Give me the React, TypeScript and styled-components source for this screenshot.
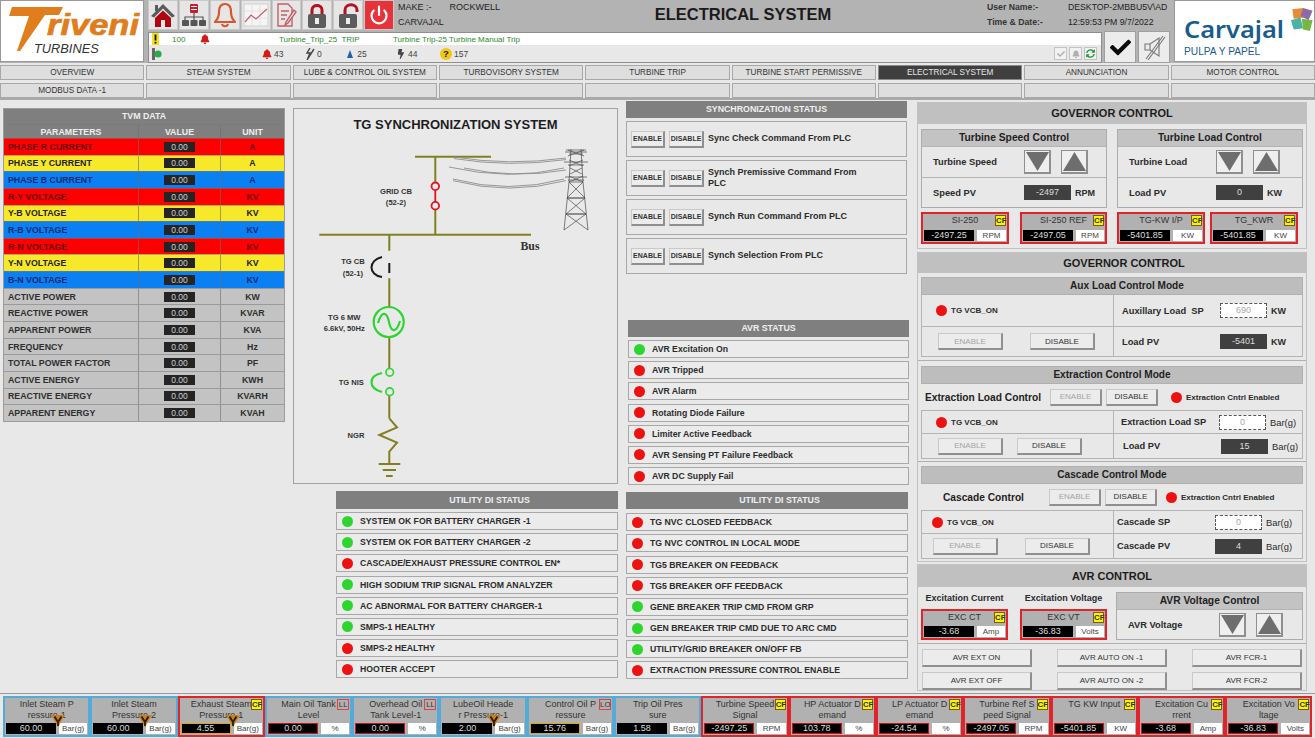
import React from 'react';
import styled, { createGlobalStyle } from 'styled-components';
import { FaBell, FaBolt, FaCheck, FaSyncAlt } from 'react-icons/fa';
import { Power } from 'lucide-react';

const GlobalStyle = createGlobalStyle`
  html, body { margin: 0; padding: 0; background: #e8e8e8; }
  * { box-sizing: border-box; }
  body { font-family: 'Liberation Sans', Arial, sans-serif; color: #222; }
`;

const Page = styled.div`
  width: 1315px;
  height: 738px;
  overflow: hidden;
  background: #e8e8e8;
  display: flex;
  flex-direction: column;
`;

/* ---------- header ---------- */
const Header = styled.header`
  height: 63px;
  background: #b3b3b3;
  display: flex;
  flex: none;
`;
const LogoBox = styled.div`
  width: 144px;
  height: 62px;
  background: #fff;
  border: 1px solid #999;
  flex: none;
`;
const CarvajalBox = styled.div`
  width: 141px;
  height: 62px;
  margin-left: 4px;
  background: #fff;
  border: 1px solid #999;
  flex: none;
`;
const HeaderMid = styled.div`
  flex: 1;
  min-width: 0;
  padding-left: 4px;
  display: flex;
  flex-direction: column;
`;
const HeaderTop = styled.div`
  height: 31px;
  display: flex;
  align-items: flex-start;
`;
const ToolButtons = styled.div`
  display: flex;
  gap: 1px;
  width: 246px;
  flex: none;
`;
const ToolButton = styled.div<{ $bg?: string }>`
  width: 30px;
  height: 30px;
  background: ${(p) => p.$bg ?? '#e6e6e6'};
  border: 1px solid #c9c9c9;
  display: flex;
  align-items: center;
  justify-content: center;
`;
const MakeGrid = styled.div`
  width: 130px;
  margin-left: 4px;
  font-size: 9px;
  line-height: 15px;
  color: #222;
  flex: none;
`;
const MakeValue = styled.span`
  margin-left: 18px;
`;
const ScreenTitle = styled.h1`
  margin: 0;
  width: 430px;
  flex: none;
  text-align: center;
  font-size: 16.5px;
  line-height: 28px;
  font-weight: 700;
  color: #1b1b1b;
`;
const UserGrid = styled.div`
  display: grid;
  grid-template-columns: 81px auto;
  font-size: 8.7px;
  line-height: 15px;
  color: #222;
  margin-left: 29px;
  flex: none;
  white-space: nowrap;
`;
const UserLabel = styled.span`
  font-weight: 700;
  color: #333;
`;
const HeaderBottom = styled.div`
  display: flex;
  height: 32px;
`;
const AlarmStrip = styled.div`
  width: 954px;
  margin-top: 1px;
  border: 1px solid #8e8e8e;
  display: flex;
  flex-direction: column;
  flex: none;
`;
const AlarmRow = styled.div`
  height: 12px;
  background: #fff;
  display: flex;
  align-items: center;
  font-size: 8px;
  color: #2a8a2a;
`;
const CountRow = styled.div`
  flex: 1;
  background: #e8e8e8;
  display: flex;
  align-items: center;
  font-size: 8.5px;
  color: #444;
`;
const Slot = styled.span<{ $w: number; $pad?: number }>`
  width: ${(p) => p.$w}px;
  padding-left: ${(p) => p.$pad ?? 0}px;
  flex: none;
  display: flex;
  align-items: center;
  gap: 2px;
  white-space: nowrap;
`;
const AckIcons = styled.div`
  margin-left: auto;
  display: flex;
  gap: 2px;
  padding-right: 4px;
  align-items: center;
`;
const AckIcon = styled.span<{ $green?: boolean }>`
  width: 13px;
  height: 13px;
  background: #f2f2f2;
  border: 1px solid #c4c4c4;
  display: flex;
  align-items: center;
  justify-content: center;
  color: ${(p) => (p.$green ? '#1f9a3a' : '#b0b0b0')};
`;
const BigButton = styled.div`
  width: 32px;
  height: 32px;
  margin-left: 2px;
  background: #ececec;
  border: 1px solid #9f9f9f;
  display: flex;
  align-items: center;
  justify-content: center;
  flex: none;
`;

/* ---------- nav ---------- */
const Nav = styled.nav`
  display: grid;
  grid-template-columns: repeat(9, 1fr);
  grid-auto-rows: 15px;
  column-gap: 2px;
  row-gap: 3px;
  padding-top: 2px;
  height: 37px;
  flex: none;
  border-bottom: 2px solid #a9a9a9;
`;
const NavItem = styled.div<{ $active?: boolean }>`
  background: ${(p) => (p.$active ? '#3f3f3f' : '#dedede')};
  color: ${(p) => (p.$active ? '#e6e6e6' : '#333')};
  border: 1px solid ${(p) => (p.$active ? '#8a8a8a' : '#a8a8a8')};
  font-size: 8.2px;
  line-height: 13px;
  text-align: center;
  white-space: nowrap;
`;

/* ---------- main columns ---------- */
const Main = styled.main`
  height: 594px;
  flex: none;
  display: grid;
  grid-template-columns: 282px 325px 283px 390px;
  column-gap: 8px;
  padding-left: 3px;
  border-bottom: 1px solid #9a9a9a;
  overflow: hidden;
`;
const Col = styled.div<{ $top: number }>`
  padding-top: ${(p) => p.$top}px;
  display: flex;
  flex-direction: column;
  min-width: 0;
`;

/* TVM table */
const Tvm = styled.div`
  border: 1px solid #9c9c9c;
  font-size: 8.8px;
  font-weight: 700;
`;
const TvmCaption = styled.div`
  height: 15px;
  background: #7f7f7f;
  color: #eee;
  text-align: center;
  line-height: 15px;
`;
const TvmRow = styled.div<{ $tone: string; $h?: number }>`
  display: grid;
  grid-template-columns: 135px 82px 1fr;
  height: ${(p) => p.$h ?? 16.65}px;
  align-items: stretch;
  border-top: 1px solid rgba(120, 120, 120, 0.55);
  background: ${(p) => ({ red: '#fe0000', yellow: '#f7e92a', blue: '#0a80f2', grey: '#c3c3c3', head: '#7f7f7f' } as Record<string, string>)[p.$tone]};
  color: ${(p) => ({ red: '#6a0408', yellow: '#222', blue: '#0b2a6e', grey: '#2e2e2e', head: '#eee' } as Record<string, string>)[p.$tone]};
`;
const TvmCell = styled.div<{ $center?: boolean }>`
  display: flex;
  align-items: center;
  justify-content: ${(p) => (p.$center ? 'center' : 'flex-start')};
  padding-left: ${(p) => (p.$center ? 0 : 4)}px;
  border-right: 1px solid rgba(110, 110, 110, 0.6);
  white-space: nowrap;
  &:last-child { border-right: none; }
`;
const TvmValue = styled.span`
  width: 31px;
  height: 10px;
  background: #242424;
  color: #cfcfcf;
  font-size: 8.5px;
  font-weight: 400;
  line-height: 10px;
  text-align: center;
`;

/* diagram */
const DiagramBox = styled.section`
  height: 376px;
  background: #e9e9e9;
  border: 1px solid #a2a2a2;
  flex: none;
`;
const DiagramTitle = styled.h2`
  margin: 0;
  height: 27px;
  padding-top: 8px;
  text-align: center;
  font-size: 13px;
  line-height: 16px;
  font-weight: 700;
  color: #1d1d1d;
`;

/* status lists */
const StatusBlock = styled.section<{ $top?: number; $left?: number; $width?: number; $end?: boolean }>`
  margin-top: ${(p) => p.$top ?? 0}px;
  margin-left: ${(p) => p.$left ?? 0}px;
  width: ${(p) => (p.$width ? `${p.$width}px` : 'auto')};
  align-self: ${(p) => (p.$end ? 'flex-end' : 'stretch')};
  flex: none;
`;
const DarkHead = styled.div<{ $h?: number; $shift?: number }>`
  height: ${(p) => p.$h ?? 17}px;
  padding-left: ${(p) => p.$shift ?? 0}px;
  background: #7f7f7f;
  color: #efefef;
  font-size: 8.8px;
  font-weight: 700;
  text-align: center;
  line-height: ${(p) => p.$h ?? 17}px;
`;
const StatusRows = styled.div<{ $top: number }>`
  margin-top: ${(p) => p.$top}px;
  display: flex;
  flex-direction: column;
  gap: 3.2px;
`;
const StatusRow = styled.div`
  height: 18px;
  border: 1px solid #a8a8a8;
  background: #ebebeb;
  display: flex;
  align-items: center;
  padding-left: 5px;
  gap: 7px;
  font-size: 8.7px;
  font-weight: 700;
  color: #2b2b2b;
  white-space: nowrap;
`;
const Dot = styled.span<{ $on?: boolean; $ml?: number; $mr?: number }>`
  width: 11px;
  height: 11px;
  margin-left: ${(p) => p.$ml ?? 0}px;
  margin-right: ${(p) => p.$mr ?? 0}px;
  border-radius: 50%;
  flex: none;
  background: ${(p) => (p.$on ? '#2fd52f' : '#ee1111')};
`;
const SyncRows = styled.div`
  margin-top: 3px;
  display: flex;
  flex-direction: column;
  gap: 3px;
`;
const SyncRow = styled.div`
  height: 36px;
  border: 1px solid #a8a8a8;
  display: flex;
  align-items: center;
  padding-left: 4px;
  gap: 4px;
  font-size: 9px;
  font-weight: 700;
  line-height: 11.5px;
  color: #2b2b2b;
`;
const RaisedButton = styled.div<{ $w: number; $h: number; $off?: boolean; $small?: boolean }>`
  width: ${(p) => p.$w}px;
  height: ${(p) => p.$h}px;
  flex: none;
  background: #ececec;
  border: 1px solid #c9c9c9;
  border-right: 2px solid #8f8f8f;
  border-bottom: 2px solid #8f8f8f;
  color: ${(p) => (p.$off ? '#a4a4a4' : '#333')};
  font-size: ${(p) => (p.$small ? 7 : 8)}px;
  font-weight: ${(p) => (p.$small ? 700 : 400)};
  display: flex;
  align-items: center;
  justify-content: center;
  white-space: nowrap;
`;
const SyncText = styled.span`
  width: 165px;
`;

/* right column */
const Section = styled.section<{ $top?: number }>`
  margin-top: ${(p) => p.$top ?? 0}px;
  border: 1px solid #c2c2c2;
  background: #e8e8e8;
  flex: none;
`;
const SectionHead = styled.div<{ $h: number; $shift?: number }>`
  height: ${(p) => p.$h}px;
  padding-left: ${(p) => p.$shift ?? 0}px;
  background: #c0c0c0;
  color: #1c1c1c;
  font-size: 11px;
  font-weight: 700;
  text-align: center;
  line-height: ${(p) => p.$h}px;
`;
const SpeedGrid = styled.div`
  display: grid;
  grid-template-columns: 186px 186px;
  column-gap: 10px;
  padding: 5px 3px 4px;
`;
const Panel = styled.div`
  border: 1px solid #acacac;
`;
const PanelHead = styled.div`
  height: 16px;
  background: #c3c3c3;
  color: #1f1f1f;
  font-size: 10.3px;
  font-weight: 700;
  text-align: center;
  line-height: 16px;
  white-space: nowrap;
`;
const PanelRow = styled.div<{ $label: number; $h?: number }>`
  display: grid;
  grid-template-columns: ${(p) => p.$label}px 1fr;
  height: ${(p) => p.$h ?? 31}px;
  align-items: center;
  border-top: 1px solid #b4b4b4;
`;
const RowLabel = styled.span`
  padding-left: 11px;
  font-size: 9.3px;
  font-weight: 700;
  color: #2b2b2b;
  white-space: nowrap;
`;
const Controls = styled.div<{ $gap?: number }>`
  display: flex;
  align-items: center;
  gap: ${(p) => p.$gap ?? 4}px;
`;
const Arrow = styled.div`
  width: 27px;
  height: 24px;
  background: #efefef;
  border: 1px solid #8f8f8f;
  border-right-width: 2px;
  border-bottom-width: 2px;
  display: flex;
  align-items: center;
  justify-content: center;
`;
const ValueBox = styled.span<{ $w?: number; $input?: boolean }>`
  width: ${(p) => p.$w ?? 47}px;
  height: 15px;
  flex: none;
  background: ${(p) => (p.$input ? '#fff' : '#404040')};
  border: ${(p) => (p.$input ? '1px dashed #555' : 'none')};
  color: ${(p) => (p.$input ? '#aaa' : '#ddd')};
  font-size: 9px;
  line-height: ${(p) => (p.$input ? 13 : 15)}px;
  text-align: center;
`;
const UnitText = styled.span`
  font-size: 9px;
  font-weight: 700;
  color: #2b2b2b;
`;
const UnitPlain = styled.span`
  font-size: 9.4px;
  color: #2b2b2b;
`;
const TileRow = styled.div<{ $gap: number }>`
  display: flex;
  gap: ${(p) => p.$gap}px;
  margin-top: 4px;
`;

const TileFrame = styled.div<{ $tone: 'red' | 'blue'; $w?: number; $h?: number }>`
  position: relative;
  width: ${(p) => (p.$w ? `${p.$w}px` : 'auto')};
  height: ${(p) => p.$h ?? 32}px;
  flex: none;
  border: 2px solid ${(p) => (p.$tone === 'red' ? '#e1242a' : '#53abd9')};
  background: #b1b1b1;
  display: flex;
  flex-direction: column;
`;
const TileTitle = styled.div`
  flex: 1;
  min-height: 0;
  padding-top: 1px;
  text-align: center;
  font-size: 9px;
  line-height: 11px;
  color: #333;
  white-space: pre-line;
`;
const TileValues = styled.div`
  display: flex;
  gap: 3px;
  padding: 0 1px 1px;
`;
const TileValue = styled.span<{ $edge?: string }>`
  width: 50px;
  height: 11px;
  flex: none;
  background: #000;
  border: 1px solid ${(p) => p.$edge ?? '#000'};
  color: #ddd;
  font-size: 9px;
  line-height: 9px;
  text-align: center;
`;
const TileUnit = styled.span`
  flex: 1;
  height: 11px;
  background: #fff;
  color: #444;
  font-size: 8px;
  line-height: 11px;
  text-align: center;
`;
const Badge = styled.span<{ $kind: string }>`
  position: absolute;
  top: 1px;
  right: 1px;
  height: 11px;
  width: ${(p) => (p.$kind === 'CF' ? 11 : 12)}px;
  background: ${(p) => (p.$kind === 'CF' ? '#f6f400' : '#b1b1b1')};
  border: 1px solid ${(p) => (p.$kind === 'CF' ? '#7d5b12' : '#d8444a')};
  color: #333;
  font-size: 7.8px;
  font-weight: ${(p) => (p.$kind === 'CF' ? 700 : 400)};
  line-height: 9px;
  text-align: center;
`;
const WarnMark = styled.svg`
  position: absolute;
  left: 46px;
  bottom: 8px;
`;

/* mode blocks */
const ModeBlock = styled.div<{ $pt?: number; $pb: number; $line?: boolean }>`
  padding: ${(p) => p.$pt ?? 4}px 3px ${(p) => p.$pb}px;
  border-bottom: ${(p) => (p.$line ? '1px solid #b0b0b0' : 'none')};
`;
const ModeHead = styled.div<{ $shift?: number }>`
  height: 18px;
  padding-left: ${(p) => p.$shift ?? 0}px;
  background: #bdbdbd;
  border: 1px solid #b0b0b0;
  color: #1f1f1f;
  font-size: 10.1px;
  font-weight: 700;
  text-align: center;
  line-height: 16px;
`;
const ModeTable = styled.div<{ $closed?: boolean }>`
  border: 1px solid #b4b4b4;
  border-top: ${(p) => (p.$closed ? '1px solid #b4b4b4' : 'none')};
  display: grid;
  grid-template-columns: 191px 1fr;
`;
const ModeCell = styled.div<{ $h: number; $pad?: number; $gap?: number; $split?: boolean; $top?: boolean }>`
  height: ${(p) => p.$h}px;
  padding-left: ${(p) => p.$pad ?? 0}px;
  display: flex;
  align-items: center;
  gap: ${(p) => p.$gap ?? 0}px;
  border-left: ${(p) => (p.$split ? '1px solid #b4b4b4' : 'none')};
  border-top: ${(p) => (p.$top ? '1px solid #b4b4b4' : 'none')};
  white-space: nowrap;
`;
const SmallLabel = styled.span`
  flex: none;
  font-size: 8px;
  font-weight: 700;
  color: #2b2b2b;
`;
const CellLabel = styled.span`
  width: 94px;
  flex: none;
  font-size: 9.3px;
  font-weight: 700;
  color: #2b2b2b;
`;
const ControlLine = styled.div<{ $pad: number }>`
  height: 26px;
  padding-left: ${(p) => p.$pad}px;
  display: flex;
  align-items: center;
`;
const ControlTitle = styled.span<{ $w: number }>`
  width: ${(p) => p.$w}px;
  flex: none;
  font-size: 10.2px;
  font-weight: 700;
  color: #222;
  white-space: nowrap;
`;

/* avr */
const AvrTop = styled.div`
  display: flex;
  padding: 5px 3px 3px;
  border-bottom: 1px solid #b0b0b0;
`;
const AvrCol = styled.div<{ $right: number }>`
  width: 87px;
  margin-right: ${(p) => p.$right}px;
  flex: none;
`;
const AvrCaption = styled.div`
  height: 17px;
  font-size: 9px;
  font-weight: 700;
  line-height: 12px;
  text-align: center;
  color: #2b2b2b;
  white-space: nowrap;
`;
const AvrPanel = styled.div`
  width: 187px;
  height: 48px;
  border: 1px solid #acacac;
`;
const AvrButtons = styled.div`
  display: grid;
  grid-template-columns: repeat(3, 110px);
  justify-content: space-between;
  row-gap: 5px;
  padding: 5px 4px 0;
`;

/* footer */
const Footer = styled.footer`
  flex: 1;
  padding: 2px 0 0 3px;
  display: grid;
  grid-template-columns: repeat(15, 87.3px);
  align-items: start;
`;

/* ---------- small drawings ---------- */
const HomeIcon = () => (
  <svg width="26" height="26" viewBox="0 0 26 26">
    <path d="M13 2 L1 14 L4 15.5 L13 6.5 L22 15.5 L25 14 Z" fill="#5a5a5a" />
    <rect x="5" y="3" width="3" height="6" fill="#5a5a5a" />
    <path d="M5 16 L13 8.5 L21 16 V25 H15 V18 H11 V25 H5 Z" fill="#b00610" />
  </svg>
);
const TreeIcon = () => (
  <svg width="26" height="24" viewBox="0 0 26 24">
    <rect x="9" y="1" width="8" height="9" rx="1" fill="#c81f2a" />
    <rect x="10" y="3" width="6" height="1" fill="#fff" />
    <rect x="10" y="6" width="6" height="1" fill="#fff" />
    <path d="M13 10 V14 M4 18 V14 H22 V18 M13 14 V18" stroke="#555" strokeWidth="1.2" fill="none" />
    <rect x="1" y="17" width="7" height="6" rx="1" fill="#555" />
    <rect x="9.5" y="17" width="7" height="6" rx="1" fill="#555" />
    <rect x="18" y="17" width="7" height="6" rx="1" fill="#555" />
  </svg>
);
const BellOutline = () => (
  <svg width="24" height="26" viewBox="0 0 24 26" fill="none" stroke="#d8562a" strokeWidth="2.2" strokeLinejoin="round">
    <path d="M12 2 C7 2 6 6 6 10 C6 15 5 17 2 20 H22 C19 17 18 15 18 10 C18 6 17 2 12 2 Z" />
    <path d="M9 22 C10 25 14 25 15 22" />
  </svg>
);
const ChartIcon = () => (
  <svg width="26" height="24" viewBox="0 0 26 24" fill="none">
    <rect x="1" y="1" width="24" height="22" fill="#f5f5f5" stroke="#cfcfcf" />
    <path d="M1 8 H25 M1 15 H25 M9 1 V23 M17 1 V23" stroke="#e2e2e2" />
    <path d="M2 19 L8 12 L13 16 L24 6" stroke="#c9606a" strokeWidth="1.2" />
  </svg>
);
const DocIcon = () => (
  <svg width="24" height="26" viewBox="0 0 24 26" fill="none" stroke="#c2606a" strokeWidth="1.4">
    <path d="M4 2 H14 L18 6 V24 H4 Z" />
    <path d="M7 9 H15 M7 13 H13 M7 17 H11" />
    <path d="M20 8 L12 20 L11 23 L14 21 L22 10 Z" fill="#e8e8e8" />
  </svg>
);
const LockIcon = ({ open }: { open?: boolean }) => (
  <svg width="24" height="27" viewBox="0 0 24 27">
    <path
      d={open ? 'M9 13 V8 C9 1 21 1 21 8 V10' : 'M7 13 V8 C7 2 17 2 17 8 V13'}
      stroke="#b5131c"
      strokeWidth="3"
      fill="none"
    />
    <rect x="3" y="12" width="18" height="14" rx="2" fill="#5c5c5c" />
    <rect x="10" y="16" width="4" height="6" fill="#eee" />
  </svg>
);
const ExclaimIcon = () => (
  <svg width="7" height="12" viewBox="0 0 7 12">
    <rect width="7" height="12" fill="#f2e21a" />
    <rect x="2.6" y="1.5" width="1.8" height="6" fill="#111" />
    <rect x="2.6" y="8.8" width="1.8" height="1.8" fill="#111" />
  </svg>
);
const RunFlag = () => (
  <svg width="10" height="12" viewBox="0 0 10 12">
    <rect x="0" y="0" width="3" height="12" fill="#666" />
    <circle cx="6" cy="6" r="3.6" fill="#2aa84a" />
  </svg>
);
const SlashBolt = () => (
  <svg width="10" height="12" viewBox="0 0 10 12" fill="none" stroke="#444" strokeWidth="1.4">
    <path d="M5 0 L2 5 H5 L3 10" />
    <path d="M9 1 L2 12" />
  </svg>
);
const SmallUp = () => (
  <svg width="6" height="8" viewBox="0 0 6 8">
    <path d="M3 0 L6 8 H0 Z" fill="#1f62ad" />
  </svg>
);
const QuestionDot = () => (
  <svg width="12" height="12" viewBox="0 0 12 12">
    <circle cx="6" cy="6" r="6" fill="#f0c814" />
    <text x="6" y="9.4" textAnchor="middle" fontSize="9.5" fontWeight="700" fill="#222" fontFamily="Liberation Sans">?</text>
  </svg>
);
const MuteIcon = () => (
  <svg width="24" height="26" viewBox="0 0 24 26" fill="none" stroke="#777" strokeWidth="1.1">
    <path d="M3 10 H8 L17 4 V22 L8 16 H3 Z" />
    <path d="M8 10 V16" />
    <path d="M21 2 L4 25" />
    <path d="M23 3 L6 26" />
  </svg>
);
const WarnTriangle = () => (
  <WarnMark width="14" height="12" viewBox="0 0 14 12">
    <path d="M0 0 H14 L7 12 Z" fill="#c9801c" />
    <path d="M3.5 1.5 L7 7 L10.5 1.5 M7 7 V11" stroke="#2e1b04" strokeWidth="1.8" fill="none" />
  </WarnMark>
);
const DownArrow = () => (
  <svg width="23" height="19" viewBox="0 0 23 19"><path d="M0 0 H23 L11.5 19 Z" fill="#6e6e6e" /></svg>
);
const UpArrow = () => (
  <svg width="23" height="19" viewBox="0 0 23 19"><path d="M11.5 0 L23 19 H0 Z" fill="#6e6e6e" /></svg>
);

const TriveniLogo = () => (
  <svg width="142" height="60" viewBox="0 0 142 60">
    <g fill="#e07d1c" fontFamily="Liberation Sans" fontWeight="700" fontStyle="italic">
      <path d="M11 6 H62 L58 14 H44 L19 50 H16 L28 15 H8 Z" />
      <text x="46" y="34" fontSize="30" stroke="#e07d1c" strokeWidth="0.7" textLength="92" lengthAdjust="spacingAndGlyphs">riveni</text>
    </g>
    <text x="33" y="52" fontSize="12.8" fontStyle="italic" fill="#333" fontFamily="Liberation Sans">TURBINES</text>
  </svg>
);
const CarvajalLogo = () => (
  <svg width="139" height="60" viewBox="0 0 139 60">
    <text x="9" y="37" fontSize="24" fill="#175c8c" fontFamily="Noto Sans" fontWeight="600" textLength="100" lengthAdjust="spacingAndGlyphs">Carvajal</text>
    <text x="9" y="54" fontSize="10.2" fill="#175c8c" fontFamily="Liberation Sans">PULPA Y PAPEL</text>
    <g transform="translate(116 7) scale(1.35) translate(-117 -8)">
      <path d="M118 9 L126 8 L127 15 L119 16 Z" fill="#e98a35" />
      <path d="M126 8 L133 10 L130 17 L124 14 Z" fill="#8d6aa8" />
      <path d="M117 17 L124 15 L126 23 L119 24 Z" fill="#49b3a6" />
      <path d="M125 16 L133 17 L131 25 L126 24 Z" fill="#76b844" />
    </g>
  </svg>
);

const Diagram = () => (
  <svg width="323" height="347" viewBox="0 28 323 347" fontFamily="Liberation Sans" fontWeight="700" fill="#333">
    <g stroke="#80801f" strokeWidth="2" fill="none">
      <path d="M121 48.7 H197" />
      <path d="M141.3 48.7 V74.5 M141.3 101.5 V126" />
      <path d="M25.3 126.7 H237" />
      <path d="M95.3 126.7 V142.7 M95.3 170.3 V198.7 M95.3 229.3 V260.5 M95.3 287.7 V310.3" />
      <path d="M95.3 310.3 L103 319.3 L85.3 327 L103 334.7 L95.3 343.7 V356" />
      <path d="M84.7 356 H106.3 M88.7 362 H102 M92 368 H98.7" />
    </g>
    <g stroke="#e4121e" strokeWidth="1.8" fill="none">
      <circle cx="141.3" cy="78.3" r="3.8" />
      <circle cx="141.3" cy="97.7" r="3.8" />
      <path d="M141.3 82 V94" />
    </g>
    <g stroke="#1b1b1b" strokeWidth="2" fill="none">
      <path d="M88 149 C74 152 74 167 88 169" />
      <path d="M95.3 155 V165" />
    </g>
    <g stroke="#2fd334" strokeWidth="2.2" fill="none">
      <circle cx="94.7" cy="214" r="15" />
      <path d="M84 215 C88 202 93 204 95 214 C97 224 102 226 106 213" />
      <circle cx="95.7" cy="264.3" r="3.8" strokeWidth="1.6" />
      <circle cx="95.7" cy="283.7" r="3.8" strokeWidth="1.6" />
      <path d="M88 265 C74 268 74 280 88 284" />
    </g>
    <g stroke="#8d8d8d" strokeWidth="0.9" fill="none">
      <path d="M160 49 Q215 58 272 50 M160 50.6 Q215 59.6 272 51.6" />
      <path d="M155 59 Q215 73 270 60 M170 60 Q220 71 272 62" />
      <path d="M159 71 Q215 86 270 71 M159 72.6 Q215 87.6 272 72.6" />
    </g>
    <g stroke="#4a4a4a" strokeWidth="0.7" fill="none">
      <path d="M272 42 H292 M271 44 H293 M275 46 H289 M274 42 L290 48 M290 42 L274 48" />
      <path d="M270 54 H294 M274 57 H290 M275 52 L289 58 M289 52 L275 58" />
      <path d="M271 69 H293 M274 72 H290 M275 68 L289 74 M289 68 L275 74" />
      <path d="M277 41 L275 74 L270 122 M287 41 L289 74 L294 122" />
      <path d="M276 60 L288 66 M288 60 L276 66" />
      <path d="M275 74 H289 L273 90 H291 L272 106 H292 L270 122 M275 74 L291 90 H273 L292 106 H272 L294 122" />
    </g>
    <g fontSize="7.6" textAnchor="middle">
      <text x="102" y="86">GRID CB</text>
      <text x="102" y="97">(52-2)</text>
      <text x="59" y="156">TG CB</text>
      <text x="59" y="167.5">(52-1)</text>
      <text x="50.3" y="212">TG 6 MW</text>
      <text x="50.3" y="223">6.6kV, 50Hz</text>
      <text x="57.3" y="277">TG NIS</text>
      <text x="62" y="330">NGR</text>
    </g>
    <text x="236" y="141.5" fontSize="11.8" textAnchor="middle" fontFamily="Liberation Serif">Bus</text>
  </svg>
);

/* ---------- data ---------- */
type TileData = {
  title: string;
  value: string;
  unit: string;
  tone: 'red' | 'blue';
  badge?: string;
  warn?: boolean;
  edge?: string;
};

const Tile = ({ t, w, h }: { t: TileData; w?: number; h?: number }) => (
  <TileFrame $tone={t.tone} $w={w} $h={h}>
    <TileTitle>{t.title}</TileTitle>
    <TileValues>
      <TileValue $edge={t.edge}>{t.value}</TileValue>
      <TileUnit>{t.unit}</TileUnit>
    </TileValues>
    {t.badge && <Badge $kind={t.badge}>{t.badge}</Badge>}
    {t.warn && <WarnTriangle />}
  </TileFrame>
);

const AMBER = '#d9a51e';
const REDLINE = '#c8141c';

const footerTiles: TileData[] = [
  { title: 'Inlet Steam P\nressure-1', value: '60.00', unit: 'Bar(g)', tone: 'blue', warn: true },
  { title: 'Inlet Steam\nPressure-2', value: '60.00', unit: 'Bar(g)', tone: 'blue', warn: true },
  { title: 'Exhaust Steam\nPressure-1', value: '4.55', unit: 'Bar(g)', tone: 'red', badge: 'CF', warn: true, edge: AMBER },
  { title: 'Main Oil Tank\nLevel', value: '0.00', unit: '%', tone: 'blue', badge: 'LL', edge: REDLINE },
  { title: 'Overhead Oil\nTank Level-1', value: '0.00', unit: '%', tone: 'blue', badge: 'LL', edge: REDLINE },
  { title: 'LubeOil Heade\nr Pressure-1', value: '2.00', unit: 'Bar(g)', tone: 'blue', warn: true },
  { title: 'Control Oil P\nressure', value: '15.76', unit: 'Bar(g)', tone: 'blue', badge: 'LO', edge: AMBER },
  { title: 'Trip Oil Pres\nsure', value: '1.58', unit: 'Bar(g)', tone: 'blue' },
  { title: 'Turbine Speed\nSignal', value: '-2497.25', unit: 'RPM', tone: 'red', badge: 'CF', edge: REDLINE },
  { title: 'HP Actuator D\nemand', value: '103.78', unit: '%', tone: 'red', badge: 'CF', edge: REDLINE },
  { title: 'LP Actuator D\nemand', value: '-24.54', unit: '%', tone: 'red', badge: 'CF', edge: REDLINE },
  { title: 'Turbine Ref S\npeed Signal', value: '-2497.05', unit: 'RPM', tone: 'red', badge: 'CF', edge: REDLINE },
  { title: 'TG KW Input', value: '-5401.85', unit: 'KW', tone: 'red', badge: 'CF', edge: REDLINE },
  { title: 'Excitation Cu\nrrent', value: '-3.68', unit: 'Amp', tone: 'red', badge: 'CF', edge: REDLINE },
  { title: 'Excitation Vo\nltage', value: '-36.83', unit: 'Volts', tone: 'red', badge: 'CF', edge: REDLINE },
];

const navItems = [
  'OVERVIEW', 'STEAM SYSTEM', 'LUBE & CONTROL OIL SYSTEM', 'TURBOVISORY SYSTEM', 'TURBINE TRIP',
  'TURBINE START PERMISSIVE', 'ELECTRICAL SYSTEM', 'ANNUNCIATION', 'MOTOR CONTROL',
  'MODBUS DATA -1', '', '', '', '', '', '', '', '',
];

const tvmRows: [string, string, string][] = [
  ['PHASE R CURRENT', 'A', 'red'], ['PHASE Y CURRENT', 'A', 'yellow'], ['PHASE B CURRENT', 'A', 'blue'],
  ['R-Y VOLTAGE', 'KV', 'red'], ['Y-B VOLTAGE', 'KV', 'yellow'], ['R-B VOLTAGE', 'KV', 'blue'],
  ['R-N VOLTAGE', 'KV', 'red'], ['Y-N VOLTAGE', 'KV', 'yellow'], ['B-N VOLTAGE', 'KV', 'blue'],
  ['ACTIVE POWER', 'KW', 'grey'], ['REACTIVE POWER', 'KVAR', 'grey'], ['APPARENT POWER', 'KVA', 'grey'],
  ['FREQUENCY', 'Hz', 'grey'], ['TOTAL POWER FACTOR', 'PF', 'grey'], ['ACTIVE ENERGY', 'KWH', 'grey'],
  ['REACTIVE ENERGY', 'KVARH', 'grey'], ['APPARENT ENERGY', 'KVAH', 'grey'],
];

const syncRows = [
  'Sync Check Command From PLC',
  'Synch Premissive Command From PLC',
  'Synch Run Command From PLC',
  'Synch Selection From PLC',
];

const avrRows: [string, boolean][] = [
  ['AVR Excitation On', true], ['AVR Tripped', false], ['AVR Alarm', false], ['Rotating Diode Failure', false],
  ['Limiter Active Feedback', false], ['AVR Sensing PT Failure Feedback', false], ['AVR DC Supply Fail', false],
];

const utilityLeft: [string, boolean][] = [
  ['SYSTEM OK FOR BATTERY CHARGER -1', true], ['SYSTEM OK FOR BATTERY CHARGER -2', true],
  ['CASCADE/EXHAUST PRESSURE CONTROL EN*', false], ['HIGH SODIUM TRIP SIGNAL FROM ANALYZER', true],
  ['AC ABNORMAL FOR BATTERY CHARGER-1', true], ['SMPS-1 HEALTHY', true], ['SMPS-2 HEALTHY', false], ['HOOTER ACCEPT', false],
];

const utilityRight: [string, boolean][] = [
  ['TG NVC CLOSED FEEDBACK', false], ['TG NVC CONTROL IN LOCAL MODE', false], ['TG5 BREAKER ON FEEDBACK', false],
  ['TG5 BREAKER OFF FEEDBACK', false], ['GENE BREAKER TRIP CMD FROM GRP', true], ['GEN BREAKER TRIP CMD DUE TO ARC CMD', true],
  ['UTILITY/GRID BREAKER ON/OFF FB', true], ['EXTRACTION PRESSURE CONTROL ENABLE', false],
];

const StatusList = ({ rows, top }: { rows: [string, boolean][]; top: number }) => (
  <StatusRows $top={top}>
    {rows.map(([text, on]) => (
      <StatusRow key={text}>
        <Dot $on={on} />
        {text}
      </StatusRow>
    ))}
  </StatusRows>
);

const App = () => (
  <Page>
    <GlobalStyle />
    <Header>
      <LogoBox><TriveniLogo /></LogoBox>
      <HeaderMid>
        <HeaderTop>
          <ToolButtons>
            <ToolButton><HomeIcon /></ToolButton>
            <ToolButton><TreeIcon /></ToolButton>
            <ToolButton><BellOutline /></ToolButton>
            <ToolButton><ChartIcon /></ToolButton>
            <ToolButton><DocIcon /></ToolButton>
            <ToolButton><LockIcon /></ToolButton>
            <ToolButton><LockIcon open /></ToolButton>
            <ToolButton $bg="#e8323a"><Power size={20} color="#fff" strokeWidth={2.6} /></ToolButton>
          </ToolButtons>
          <MakeGrid>
            <div>MAKE :-<MakeValue>ROCKWELL</MakeValue></div>
            <div>CARVAJAL</div>
          </MakeGrid>
          <ScreenTitle>ELECTRICAL SYSTEM</ScreenTitle>
          <UserGrid>
            <UserLabel>User Name:-</UserLabel><span>DESKTOP-2MBBU5V\AD</span>
            <UserLabel>Time &amp; Date:-</UserLabel><span>12:59:53 PM 9/7/2022</span>
          </UserGrid>
        </HeaderTop>
        <HeaderBottom>
          <AlarmStrip>
            <AlarmRow>
              <Slot $w={23} $pad={3}><ExclaimIcon /></Slot>
              <Slot $w={28}>100</Slot>
              <Slot $w={79}><FaBell size={10} color="#d51a1a" /></Slot>
              <Slot $w={114}>Turbine_Trip_25&nbsp; TRIP</Slot>
              <Slot $w={200}>Turbine Trip-25 Turbine Manual Trip</Slot>
            </AlarmRow>
            <CountRow>
              <Slot $w={113} $pad={3}><RunFlag /></Slot>
              <Slot $w={43}><FaBell size={10} color="#d51a1a" />43</Slot>
              <Slot $w={42}><SlashBolt />0</Slot>
              <Slot $w={49}><SmallUp />&nbsp;25</Slot>
              <Slot $w={44}><FaBolt size={10} color="#444" />44</Slot>
              <Slot $w={60}><QuestionDot />157</Slot>
              <AckIcons>
                <AckIcon><FaCheck size={8} /></AckIcon>
                <AckIcon><FaBell size={8} /></AckIcon>
                <AckIcon $green><FaSyncAlt size={9} /></AckIcon>
              </AckIcons>
            </CountRow>
          </AlarmStrip>
          <BigButton><FaCheck size={21} color="#0a0a0a" /></BigButton>
          <BigButton><MuteIcon /></BigButton>
        </HeaderBottom>
      </HeaderMid>
      <CarvajalBox><CarvajalLogo /></CarvajalBox>
    </Header>

    <Nav>
      {navItems.map((item, i) => (
        <NavItem key={i} $active={item === 'ELECTRICAL SYSTEM'}>{item}</NavItem>
      ))}
    </Nav>

    <Main>
      <Col $top={8}>
        <Tvm>
          <TvmCaption>TVM DATA</TvmCaption>
          <TvmRow $tone="head" $h={14}>
            <TvmCell $center>PARAMETERS</TvmCell>
            <TvmCell $center>VALUE</TvmCell>
            <TvmCell $center>UNIT</TvmCell>
          </TvmRow>
          {tvmRows.map(([name, unit, tone]) => (
            <TvmRow key={name} $tone={tone}>
              <TvmCell>{name}</TvmCell>
              <TvmCell $center><TvmValue>0.00</TvmValue></TvmCell>
              <TvmCell $center>{unit}</TvmCell>
            </TvmRow>
          ))}
        </Tvm>
      </Col>

      <Col $top={8}>
        <DiagramBox>
          <DiagramTitle>TG SYNCHRONIZATION SYSTEM</DiagramTitle>
          <Diagram />
        </DiagramBox>
        <StatusBlock $top={7} $width={282} $end>
          <DarkHead $h={18} $shift={25}>UTILITY DI STATUS</DarkHead>
          <StatusList rows={utilityLeft} top={3} />
        </StatusBlock>
      </Col>

      <Col $top={1}>
        <StatusBlock $width={281}>
          <DarkHead>SYNCHRONIZATION STATUS</DarkHead>
          <SyncRows>
            {syncRows.map((text) => (
              <SyncRow key={text}>
                <RaisedButton $w={34} $h={17} $small>ENABLE</RaisedButton>
                <RaisedButton $w={35} $h={17} $small>DISABLE</RaisedButton>
                <SyncText>{text}</SyncText>
              </SyncRow>
            ))}
          </SyncRows>
        </StatusBlock>
        <StatusBlock $top={46} $left={2}>
          <DarkHead>AVR STATUS</DarkHead>
          <StatusList rows={avrRows} top={3} />
        </StatusBlock>
        <StatusBlock $top={7} $width={282}>
          <DarkHead $shift={25}>UTILITY DI STATUS</DarkHead>
          <StatusList rows={utilityRight} top={4} />
        </StatusBlock>
      </Col>

      <Col $top={2}>
        <Section>
          <SectionHead $h={21}>GOVERNOR CONTROL</SectionHead>
          <SpeedGrid>
            <div>
              <Panel>
                <PanelHead>Turbine Speed Control</PanelHead>
                <PanelRow $label={102}>
                  <RowLabel>Turbine Speed</RowLabel>
                  <Controls $gap={10}><Arrow><DownArrow /></Arrow><Arrow><UpArrow /></Arrow></Controls>
                </PanelRow>
                <PanelRow $label={102} $h={30}>
                  <RowLabel>Speed PV</RowLabel>
                  <Controls><ValueBox>-2497</ValueBox><UnitText>RPM</UnitText></Controls>
                </PanelRow>
              </Panel>
              <TileRow $gap={11}>
                <Tile w={88} t={{ title: 'SI-250', value: '-2497.25', unit: 'RPM', tone: 'red', badge: 'CF' }} />
                <Tile w={87} t={{ title: 'SI-250 REF', value: '-2497.05', unit: 'RPM', tone: 'red', badge: 'CF' }} />
              </TileRow>
            </div>
            <div>
              <Panel>
                <PanelHead>Turbine Load Control</PanelHead>
                <PanelRow $label={98}>
                  <RowLabel>Turbine Load</RowLabel>
                  <Controls $gap={10}><Arrow><DownArrow /></Arrow><Arrow><UpArrow /></Arrow></Controls>
                </PanelRow>
                <PanelRow $label={98} $h={30}>
                  <RowLabel>Load PV</RowLabel>
                  <Controls><ValueBox>0</ValueBox><UnitText>KW</UnitText></Controls>
                </PanelRow>
              </Panel>
              <TileRow $gap={5}>
                <Tile w={88} t={{ title: 'TG-KW I/P', value: '-5401.85', unit: 'KW', tone: 'red', badge: 'CF' }} />
                <Tile w={88} t={{ title: 'TG_KWR', value: '-5401.85', unit: 'KW', tone: 'red', badge: 'CF' }} />
              </TileRow>
            </div>
          </SpeedGrid>
        </Section>

        <Section $top={3}>
          <SectionHead $h={20} $shift={24}>GOVERNOR CONTROL</SectionHead>
          <ModeBlock $pb={3} $line>
            <ModeHead $shift={30}>Aux Load Control Mode</ModeHead>
            <ModeTable>
              <ModeCell $h={31} $pad={14} $gap={4}><Dot /><SmallLabel>TG VCB_ON</SmallLabel></ModeCell>
              <ModeCell $h={31} $pad={8} $gap={4} $split>
                <CellLabel>Auxillary Load&nbsp; SP</CellLabel>
                <ValueBox $input>690</ValueBox>
                <UnitText>KW</UnitText>
              </ModeCell>
              <ModeCell $h={30} $pad={16} $gap={27} $top>
                <RaisedButton $w={65} $h={17} $off>ENABLE</RaisedButton>
                <RaisedButton $w={65} $h={17}>DISABLE</RaisedButton>
              </ModeCell>
              <ModeCell $h={30} $pad={8} $gap={4} $split $top>
                <CellLabel>Load PV</CellLabel>
                <ValueBox>-5401</ValueBox>
                <UnitText>KW</UnitText>
              </ModeCell>
            </ModeTable>
          </ModeBlock>
          <ModeBlock $pt={5} $pb={2} $line>
            <ModeHead>Extraction Control Mode</ModeHead>
            <ControlLine $pad={4}>
              <ControlTitle $w={125}>Extraction Load Control</ControlTitle>
              <Controls>
                <RaisedButton $w={52} $h={17} $off>ENABLE</RaisedButton>
                <RaisedButton $w={52} $h={17}>DISABLE</RaisedButton>
              </Controls>
              <Dot $ml={13} $mr={4} />
              <SmallLabel>Extraction Cntrl Enabled</SmallLabel>
            </ControlLine>
            <ModeTable $closed>
              <ModeCell $h={22} $pad={14} $gap={4}><Dot /><SmallLabel>TG VCB_ON</SmallLabel></ModeCell>
              <ModeCell $h={22} $pad={7} $gap={4} $split>
                <CellLabel>Extraction Load SP</CellLabel>
                <ValueBox $input>0</ValueBox>
                <UnitPlain>Bar(g)</UnitPlain>
              </ModeCell>
              <ModeCell $h={25} $pad={16} $gap={14} $top>
                <RaisedButton $w={65} $h={17} $off>ENABLE</RaisedButton>
                <RaisedButton $w={65} $h={17}>DISABLE</RaisedButton>
              </ModeCell>
              <ModeCell $h={25} $pad={9} $gap={4} $split $top>
                <CellLabel>Load PV</CellLabel>
                <ValueBox>15</ValueBox>
                <UnitPlain>Bar(g)</UnitPlain>
              </ModeCell>
            </ModeTable>
          </ModeBlock>
          <ModeBlock $pb={2}>
            <ModeHead>Cascade Control Mode</ModeHead>
            <ControlLine $pad={22}>
              <ControlTitle $w={106}>Cascade Control</ControlTitle>
              <Controls>
                <RaisedButton $w={52} $h={17} $off>ENABLE</RaisedButton>
                <RaisedButton $w={52} $h={17}>DISABLE</RaisedButton>
              </Controls>
              <Dot $ml={9} $mr={4} />
              <SmallLabel>Extraction Cntrl Enabled</SmallLabel>
            </ControlLine>
            <ModeTable $closed>
              <ModeCell $h={22} $pad={10} $gap={4}><Dot /><SmallLabel>TG VCB_ON</SmallLabel></ModeCell>
              <ModeCell $h={22} $pad={3} $gap={4} $split>
                <CellLabel>Cascade SP</CellLabel>
                <ValueBox $input>0</ValueBox>
                <UnitPlain>Bar(g)</UnitPlain>
              </ModeCell>
              <ModeCell $h={25} $pad={11} $gap={27} $top>
                <RaisedButton $w={65} $h={17} $off>ENABLE</RaisedButton>
                <RaisedButton $w={65} $h={17}>DISABLE</RaisedButton>
              </ModeCell>
              <ModeCell $h={25} $pad={3} $gap={4} $split $top>
                <CellLabel>Cascade PV</CellLabel>
                <ValueBox>4</ValueBox>
                <UnitPlain>Bar(g)</UnitPlain>
              </ModeCell>
            </ModeTable>
          </ModeBlock>
        </Section>

        <Section $top={2}>
          <SectionHead $h={22}>AVR CONTROL</SectionHead>
          <AvrTop>
            <AvrCol $right={12}>
              <AvrCaption>Excitation Current</AvrCaption>
              <Tile h={31} t={{ title: 'EXC CT', value: '-3.68', unit: 'Amp', tone: 'red', badge: 'CF' }} />
            </AvrCol>
            <AvrCol $right={9}>
              <AvrCaption>Excitation Voltage</AvrCaption>
              <Tile h={31} t={{ title: 'EXC VT', value: '-36.83', unit: 'Volts', tone: 'red', badge: 'CF' }} />
            </AvrCol>
            <AvrPanel>
              <PanelHead>AVR Voltage Control</PanelHead>
              <PanelRow $label={102} $h={30}>
                <RowLabel>AVR Voltage</RowLabel>
                <Controls $gap={10}><Arrow><DownArrow /></Arrow><Arrow><UpArrow /></Arrow></Controls>
              </PanelRow>
            </AvrPanel>
          </AvrTop>
          <AvrButtons>
            <RaisedButton $w={110} $h={18}>AVR EXT ON</RaisedButton>
            <RaisedButton $w={110} $h={18}>AVR AUTO ON -1</RaisedButton>
            <RaisedButton $w={110} $h={18}>AVR FCR-1</RaisedButton>
            <RaisedButton $w={110} $h={18}>AVR EXT OFF</RaisedButton>
            <RaisedButton $w={110} $h={18}>AVR AUTO ON -2</RaisedButton>
            <RaisedButton $w={110} $h={18}>AVR FCR-2</RaisedButton>
          </AvrButtons>
        </Section>
      </Col>
    </Main>

    <Footer>
      {footerTiles.map((t) => (
        <Tile key={t.title} t={t} h={41} />
      ))}
    </Footer>
  </Page>
);

export default App;
